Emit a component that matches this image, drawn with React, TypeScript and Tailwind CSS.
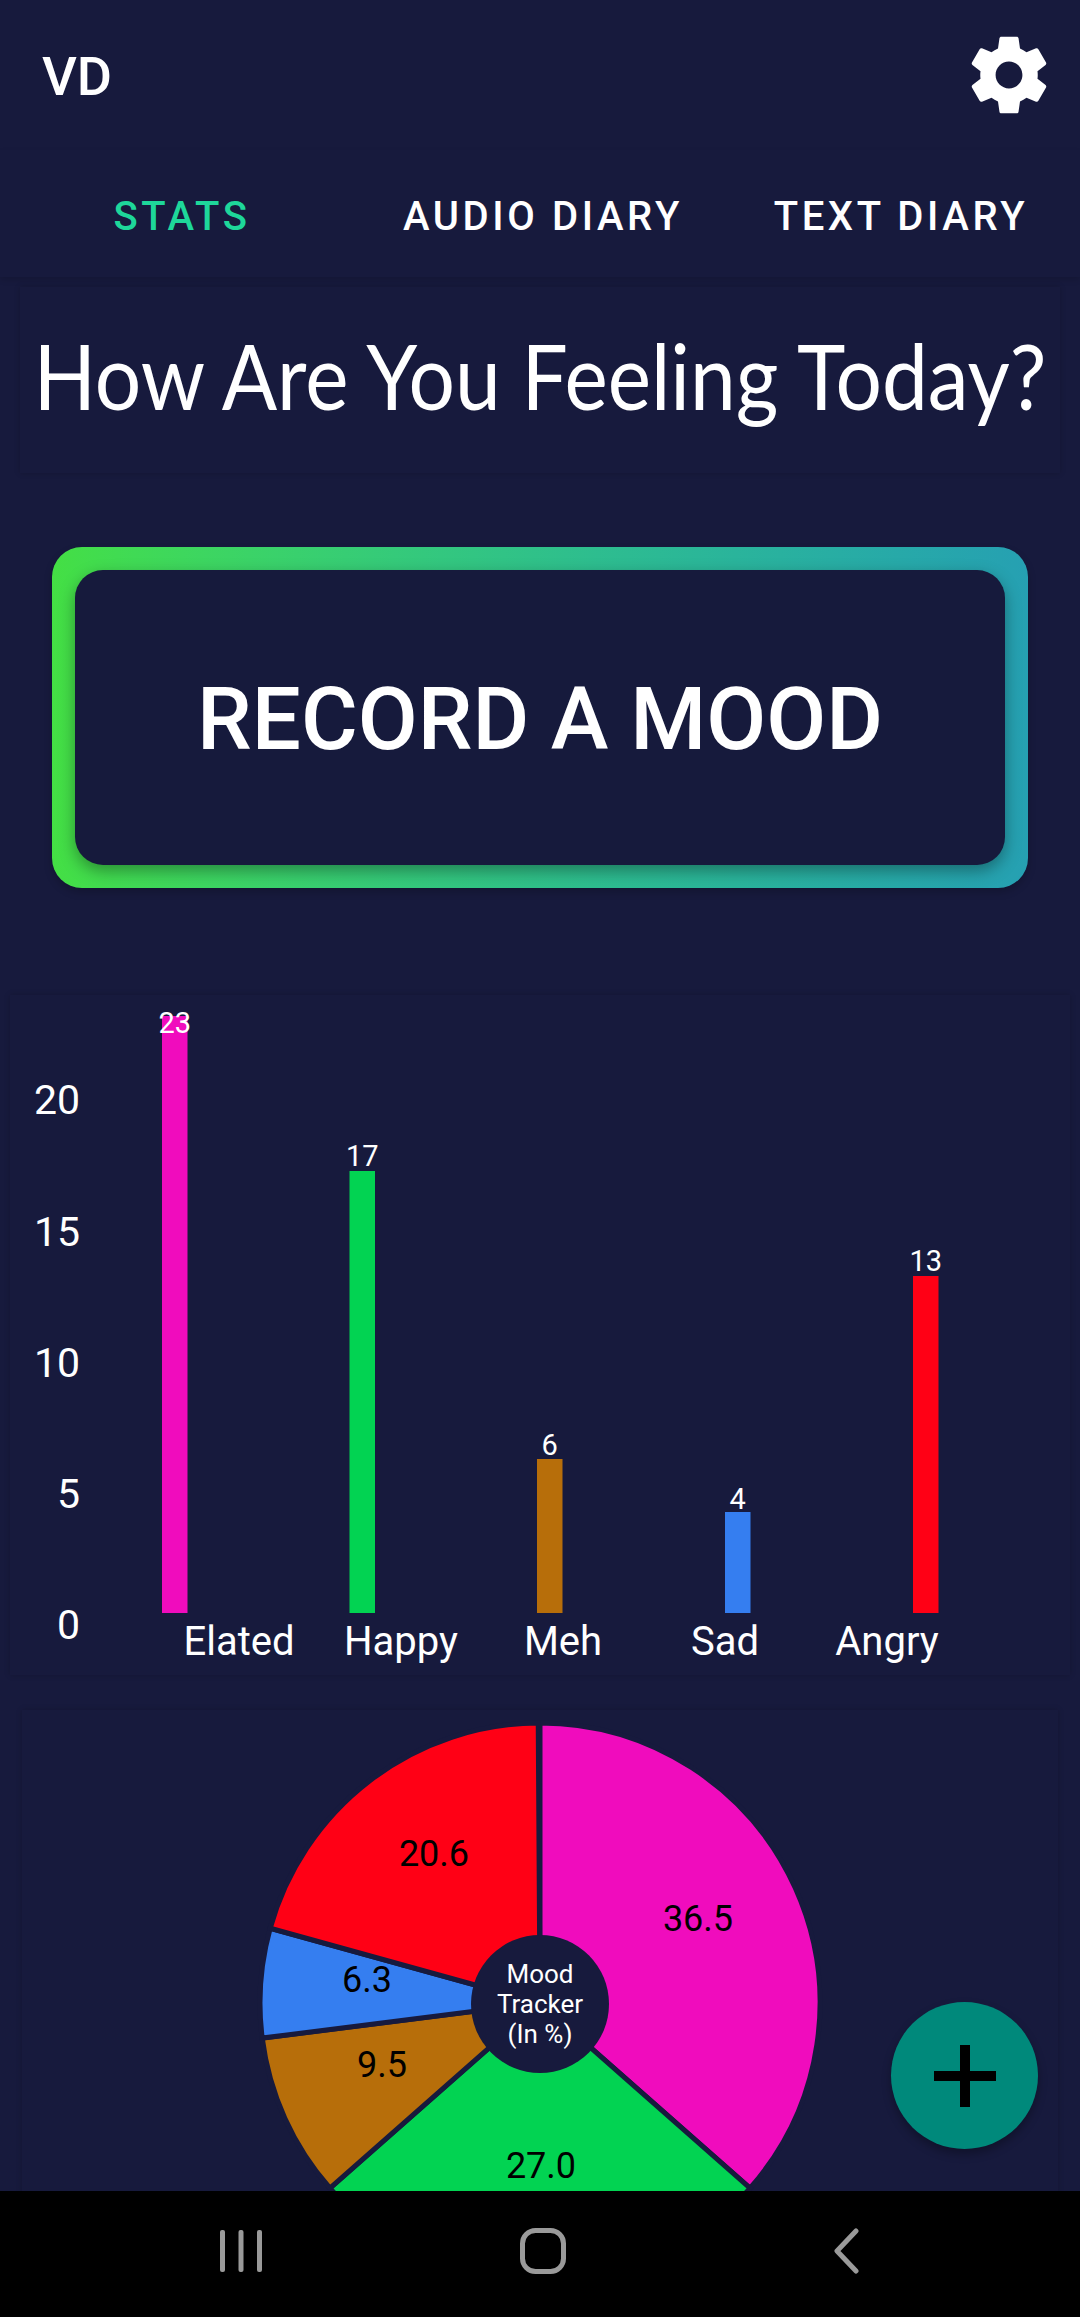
import React from "react";

const BG = "#171a3d";

const bars = [
  { label: "Elated", value: 23, x: 162, top: 1016, labelY: 1033, color: "#f00cbd" },
  { label: "Happy", value: 17, x: 349.5, top: 1171, labelY: 1166, color: "#02d352" },
  { label: "Meh", value: 6, x: 537, top: 1459, labelY: 1455, color: "#b76e0a" },
  { label: "Sad", value: 4, x: 725, top: 1512, labelY: 1509, color: "#357ef0" },
  { label: "Angry", value: 13, x: 913, top: 1276, labelY: 1271, color: "#ff0015" },
];

const xLabels = [
  { text: "Elated", x: 239 },
  { text: "Happy", x: 401 },
  { text: "Meh", x: 563 },
  { text: "Sad", x: 725 },
  { text: "Angry", x: 887 },
];

const ticks = [
  { text: "20", y: 1099 },
  { text: "15", y: 1231 },
  { text: "10", y: 1362 },
  { text: "5", y: 1493 },
  { text: "0", y: 1624 },
];

const BASELINE = 1613;

const slices = [
  { pct: 36.5, color: "#f00cbd", lx: 698, ly: 1918 },
  { pct: 27.0, color: "#02d352", lx: 541, ly: 2165 },
  { pct: 9.5, color: "#b76e0a", lx: 382, ly: 2064 },
  { pct: 6.3, color: "#357ef0", lx: 367, ly: 1979 },
  { pct: 20.6, color: "#ff0015", lx: 434, ly: 1853 },
];

const CX = 540;
const CY = 2003;
const R = 280;

function slicePath(from: number, to: number) {
  const a = (from / 100) * Math.PI * 2;
  const b = (to / 100) * Math.PI * 2;
  const x1 = CX + R * Math.sin(a);
  const y1 = CY - R * Math.cos(a);
  const x2 = CX + R * Math.sin(b);
  const y2 = CY - R * Math.cos(b);
  const large = to - from > 50 ? 1 : 0;
  return `M${CX} ${CY}L${x1} ${y1}A${R} ${R} 0 ${large} 1 ${x2} ${y2}Z`;
}

const BarChart = () => (
  <svg viewBox="10 995 1060 680" className="block w-full h-full">
    {ticks.map((t) => (
      <text key={t.text} x={80} y={t.y} dy="0.36em" textAnchor="end" fontSize={41} fill="#fff">
        {t.text}
      </text>
    ))}
    {bars.map((b) => (
      <g key={b.label}>
        <rect x={b.x} y={b.top} width={25.5} height={BASELINE - b.top} fill={b.color} />
        <text x={b.x + 12.75} y={b.labelY} textAnchor="middle" fontSize={29} fill="#fff">
          {b.value}
        </text>
      </g>
    ))}
    {xLabels.map((l) => (
      <text key={l.text} x={l.x} y={1655} textAnchor="middle" fontSize={40} fill="#fff">
        {l.text}
      </text>
    ))}
  </svg>
);

const PieChart = () => {
  let acc = 0;
  return (
    <svg viewBox="22 1710 1036 500" className="block w-full h-[500px]">
      {slices.map((s) => {
        const d = slicePath(acc, acc + s.pct);
        acc += s.pct;
        return <path key={s.color} d={d} fill={s.color} stroke={BG} strokeWidth={5} />;
      })}
      {slices.map((s) => (
        <text key={s.pct} x={s.lx} y={s.ly} dy="0.36em" textAnchor="middle" fontSize={36} fill="#000">
          {s.pct.toFixed(1)}
        </text>
      ))}
      <circle cx={CX} cy={2004} r={69} fill={BG} />
      <text x={CX} textAnchor="middle" fontSize={26} fill="#fff">
        <tspan x={CX} y={1983}>Mood</tspan>
        <tspan x={CX} y={2013}>Tracker</tspan>
        <tspan x={CX} y={2043}>(In %)</tspan>
      </text>
    </svg>
  );
};

export default function App() {
  return (
    <div className="relative flex flex-col w-[1080px] h-[2317px] overflow-hidden bg-[#171a3d] font-['Roboto',sans-serif] text-white">
      <div className="flex-1 min-h-0 overflow-hidden">
        {/* app bar */}
        <div className="flex items-center justify-between h-[150px] pl-[42px] pr-[25px]">
          <span className="pt-[2px] text-[54px] font-medium">VD</span>
          <svg viewBox="0 0 24 24" className="w-[92px] h-[92px] fill-white">
            <path d="M19.43 12.98c.04-.32.07-.64.07-.98s-.03-.66-.07-.98l2.11-1.65c.19-.15.24-.42.12-.64l-2-3.46c-.12-.22-.39-.3-.61-.22l-2.49 1c-.52-.4-1.08-.73-1.69-.98l-.38-2.65C14.46 2.18 14.25 2 14 2h-4c-.25 0-.46.18-.49.42l-.38 2.65c-.61.25-1.17.59-1.69.98l-2.49-1c-.23-.09-.49 0-.61.22l-2 3.46c-.13.22-.07.49.12.64l2.11 1.65c-.04.32-.07.65-.07.98s.03.66.07.98l-2.11 1.65c-.19.15-.24.42-.12.64l2 3.46c.12.22.39.3.61.22l2.49-1c.52.4 1.08.73 1.69.98l.38 2.65c.03.24.24.42.49.42h4c.25 0 .46-.18.49-.42l.38-2.65c.61-.25 1.17-.59 1.69-.98l2.49 1c.23.09.49 0 .61-.22l2-3.46c.12-.22.07-.49-.12-.64l-2.11-1.65zM12 15.5c-1.93 0-3.5-1.57-3.5-3.5s1.57-3.5 3.5-3.5 3.5 1.57 3.5 3.5-1.57 3.5-3.5 3.5z" />
          </svg>
        </div>

        {/* tabs */}
        <div className="grid grid-cols-3 items-center h-[127px] pt-[6px] text-[40px] font-medium tracking-[3.6px] shadow-[0_3px_6px_rgba(0,0,0,0.12)]">
          <span className="text-center text-[#1ed79a] pl-[4px]">STATS</span>
          <span className="text-center pl-[6px]">AUDIO DIARY</span>
          <span className="text-center pl-[2px]">TEXT DIARY</span>
        </div>

        {/* title */}
        <div className="flex items-center justify-center mx-[20px] mt-[10px] h-[186px] pb-[10px] shadow-[0_0_6px_rgba(0,0,0,0.18)]">
          <span className="font-['Lato',sans-serif] font-normal text-[82px] whitespace-nowrap scale-y-110">
            How Are You Feeling Today?
          </span>
        </div>

        {/* record button */}
        <div className="mx-[52px] mt-[74px] h-[341px] p-[23px] rounded-[30px] bg-gradient-to-r from-[#44df44] to-[#26a0b2] shadow-[0_4px_8px_rgba(0,0,0,0.2)]">
          <div className="flex items-center justify-center h-full pt-[4px] rounded-[28px] bg-[#161a3c] shadow-[0_6px_16px_rgba(0,0,0,0.35)]">
            <span className="text-[87px] font-medium">RECORD A MOOD</span>
          </div>
        </div>

        {/* bar chart card */}
        <div className="mx-[10px] mt-[107px] h-[680px] shadow-[0_0_6px_rgba(0,0,0,0.18)]">
          <BarChart />
        </div>

        {/* pie chart card */}
        <div className="mx-[22px] mt-[35px] shadow-[0_0_6px_rgba(0,0,0,0.18)]">
          <PieChart />
        </div>
      </div>

      {/* floating add button */}
      <div className="absolute left-[891px] top-[2002px] flex items-center justify-center w-[147px] h-[147px] rounded-full bg-[#00897b] shadow-[0_5px_10px_rgba(0,0,0,0.3)]">
        <svg viewBox="0 0 62 62" className="w-[62px] h-[62px] fill-black">
          <rect x="26" y="0" width="10" height="62" />
          <rect x="0" y="26" width="62" height="10" />
        </svg>
      </div>

      {/* system nav */}
      <div className="grid grid-cols-[302px_302px_302px] items-center h-[126px] pl-[90px] pb-[6px] bg-black">
        <svg viewBox="0 0 42 46" className="justify-self-center w-[42px] h-[46px] fill-[#9a9a9a]">
          <rect x="0" y="2" width="5" height="42" rx="2" />
          <rect x="18.5" y="2" width="5" height="42" rx="2" />
          <rect x="37" y="2" width="5" height="42" rx="2" />
        </svg>
        <svg viewBox="0 0 46 46" className="justify-self-center w-[46px] h-[46px] fill-none stroke-[#9a9a9a] stroke-[5]">
          <rect x="2.5" y="2.5" width="41" height="41" rx="13" />
        </svg>
        <svg viewBox="0 0 26 46" className="justify-self-center w-[26px] h-[46px] ml-[2px] fill-none stroke-[#9a9a9a] stroke-[5]">
          <path d="M23 3 L4 23 L23 43" strokeLinecap="round" strokeLinejoin="round" />
        </svg>
      </div>
    </div>
  );
}
